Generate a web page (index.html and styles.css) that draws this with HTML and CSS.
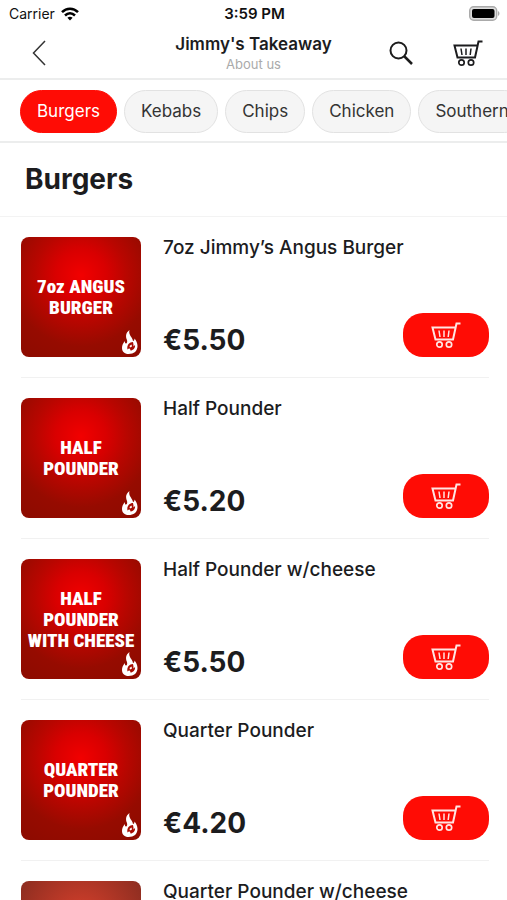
FILE: index.html
```
<!DOCTYPE html>
<html lang="en">
<head>
    <meta charset="UTF-8">
    <meta name="viewport" content="width=device-width, initial-scale=1.0">
    <title>Jimmy's Takeaway</title>
    <link rel="stylesheet" href="styles.css">
</head>
<body>
    <!-- Shared icons -->
    <svg class="sprite" aria-hidden="true">
        <symbol id="cart" viewBox="0 0 30 28">
            <g fill="none" stroke="currentColor" stroke-width="2">
                <path d="M29.5 2.500H25.500L22 18.500H4.500L1.500 6.500H24.500"/>
                <path d="M8 9.500l1 6.500M13 9.500V16M18 9.500l-.8 6.500" stroke-width="1.500"/>
                <circle cx="8.500" cy="23.500" r="2.700" stroke-width="1.700"/>
                <circle cx="18" cy="23.500" r="2.700" stroke-width="1.700"/>
            </g>
        </symbol>
        <symbol id="flame" viewBox="0 0 16 24">
            <path fill="#fff" d="M7.500 0C3.500 3 3.500 6.500 5 10C5.500 12 5 13.500 4 13.500C3 13.500 2.800 12.500 3 11C.8 13.500 0 15.500 0 18C0 21.500 2.500 24 6.500 24C12 24 15.500 21 15.500 16C15.500 12.500 14 10.500 12.500 8.500C12.500 10 12 11 11 11C10.500 7 6 5 7.500 0Z"/>
            <path fill="#a80c02" d="M11 12C7.500 12 4.500 15 5.500 19.500C7 18 8 18 8.500 20.500C11 20.500 13.500 18 13 15L11.500 16.500C11.500 15 11.500 13.500 11 12Z"/>
            <path fill="#fff" d="M7.500 16l2-1.500 .5 2-2 1z"/>
        </symbol>
    </svg>

    <div class="status-bar">
        <div class="carrier">
            <span>Carrier</span>
            <svg width="18" height="14" viewBox="0 0 18 14" fill="none" stroke="#000" stroke-width="2.500">
                <path d="M1 5.200C5.500 .6 12.500 .6 17 5.200"/>
                <path d="M4 8.500C7 5.600 11 5.600 14 8.500"/>
                <path d="M6.400 10.800C8 9.400 10 9.400 11.600 10.800L9 13.600Z" fill="#000" stroke="none"/>
            </svg>
        </div>
        <span class="time">3:59 PM</span>
        <svg class="battery" width="31" height="15" viewBox="0 0 31 15">
            <rect x=".7" y=".7" width="27" height="13.600" rx="4" fill="#ddd" stroke="#aaa" stroke-width="1.400"/>
            <rect x="3" y="3" width="22.500" height="9" rx="2" fill="#000"/>
            <path d="M29 5C31 6 31 9 29 10Z" fill="#aaa"/>
        </svg>
    </div>

    <header class="header">
        <button class="icon-button back" type="button" aria-label="Back">
            <svg width="14" height="26" viewBox="0 0 14 26" fill="none" stroke="#333" stroke-width="1.500"><path d="M13 1L1.500 13L13 25"/></svg>
        </button>
        <div class="title">
            <h1>Jimmy's Takeaway</h1>
            <a href="#about">About us</a>
        </div>
        <div class="actions">
            <button class="icon-button" type="button" aria-label="Search">
                <svg width="24" height="24" viewBox="0 0 24 24" fill="none" stroke="#1c1c1c" stroke-width="2"><circle cx="9.500" cy="9.500" r="8"/><path d="M15 15l8 8" stroke-width="2.500"/></svg>
            </button>
            <button class="icon-button" type="button" aria-label="Basket">
                <svg width="30" height="28"><use href="#cart"/></svg>
            </button>
        </div>
    </header>

    <nav class="tabs">
        <a class="tab active" href="#burgers">Burgers</a>
        <a class="tab" href="#kebabs">Kebabs</a>
        <a class="tab" href="#chips">Chips</a>
        <a class="tab" href="#chicken">Chicken</a>
        <a class="tab" href="#southern">Southern</a>
    </nav>

    <main id="burgers">
        <h2>Burgers</h2>
        <ul class="menu">
            <li class="item">
                <div class="thumb">7oz ANGUS<br>BURGER<svg class="flame"><use href="#flame"/></svg></div>
                <div class="info">
                    <h3>7oz Jimmy’s Angus Burger</h3>
                    <div class="buy">
                        <span class="price">€5.50</span>
                        <button class="add" type="button" aria-label="Add 7oz Jimmy’s Angus Burger"><svg width="30" height="28"><use href="#cart"/></svg></button>
                    </div>
                </div>
            </li>
            <li class="item">
                <div class="thumb">HALF<br>POUNDER<svg class="flame"><use href="#flame"/></svg></div>
                <div class="info">
                    <h3>Half Pounder</h3>
                    <div class="buy">
                        <span class="price">€5.20</span>
                        <button class="add" type="button" aria-label="Add Half Pounder"><svg width="30" height="28"><use href="#cart"/></svg></button>
                    </div>
                </div>
            </li>
            <li class="item">
                <div class="thumb">HALF<br>POUNDER<br>WITH CHEESE<svg class="flame"><use href="#flame"/></svg></div>
                <div class="info">
                    <h3>Half Pounder w/cheese</h3>
                    <div class="buy">
                        <span class="price">€5.50</span>
                        <button class="add" type="button" aria-label="Add Half Pounder w/cheese"><svg width="30" height="28"><use href="#cart"/></svg></button>
                    </div>
                </div>
            </li>
            <li class="item">
                <div class="thumb">QUARTER<br>POUNDER<svg class="flame"><use href="#flame"/></svg></div>
                <div class="info">
                    <h3>Quarter Pounder</h3>
                    <div class="buy">
                        <span class="price">€4.20</span>
                        <button class="add" type="button" aria-label="Add Quarter Pounder"><svg width="30" height="28"><use href="#cart"/></svg></button>
                    </div>
                </div>
            </li>
            <li class="item">
                <div class="thumb faded"></div>
                <div class="info">
                    <h3>Quarter Pounder w/cheese</h3>
                </div>
            </li>
        </ul>
    </main>
</body>
</html>
```
FILE: styles.css
```
* {
    box-sizing: border-box;
}
html, body {
    height: 100%;
}
body {
    margin: 0;
    display: flex;
    flex-direction: column;
    overflow: hidden;
    background: #fff;
    color: #1c1c1e;
    font-family: Inter, "Liberation Sans", sans-serif;
}
h1, h2, h3 {
    margin: 0;
    font-weight: 600;
}
button {
    padding: 0;
    border: none;
    background: none;
    color: inherit;
    cursor: pointer;
}
a {
    text-decoration: none;
}
svg {
    display: block;
}
.sprite {
    display: none;
}

/* Status bar */
.status-bar {
    flex: none;
    display: grid;
    grid-template-columns: 1fr auto 1fr;
    align-items: center;
    height: 27px;
    padding: 0 7px 0 9px;
    font-size: 14px;
    color: #111;
}
.carrier {
    display: flex;
    align-items: center;
    gap: 6px;
}
.time {
    font-size: 15px;
    font-weight: 600;
}
.battery {
    justify-self: end;
}

/* Header */
.header {
    flex: none;
    display: grid;
    grid-template-columns: 1fr auto 1fr;
    align-items: center;
    height: 53px;
    padding: 0 24px;
    border-bottom: 2px solid #eceded;
}
.back {
    justify-self: start;
    padding-left: 8px;
}
.title {
    text-align: center;
}
.title h1 {
    font-size: 17px;
    line-height: 22px;
}
.title a {
    display: block;
    font-size: 13px;
    line-height: 18px;
    color: #aaa;
}
.actions {
    display: flex;
    justify-content: flex-end;
    align-items: center;
    gap: 40px;
}

/* Category tabs */
.tabs {
    flex: none;
    display: flex;
    gap: 7px;
    padding: 10px 20px 8px;
    border-bottom: 2px solid #eceded;
    overflow: hidden;
}
.tab {
    flex: none;
    padding: 0 16px;
    border: 1px solid #e2e2e2;
    border-radius: 22px;
    background: #f5f5f5;
    color: #333;
    font-size: 17px;
    line-height: 41px;
}
.tab.active {
    background: #ff0c05;
    border-color: #ff0c05;
    color: #fff;
}

/* Menu list */
main {
    flex: 1;
    min-height: 0;
    overflow: hidden;
}
h2 {
    padding: 0 25px;
    border-bottom: 1px solid #f3f3f3;
    font-size: 28px;
    font-weight: 700;
    line-height: 73px;
}
.menu {
    margin: 0;
    padding: 0 18px 0 21px;
    list-style: none;
}
.item {
    display: flex;
    gap: 22px;
    padding: 20px 0;
    border-bottom: 1px solid #f1f1f1;
}
.thumb {
    flex: none;
    position: relative;
    display: grid;
    place-content: center;
    width: 120px;
    height: 120px;
    border-radius: 8px;
    background: radial-gradient(circle at 50% 32%, #f20000 0, #d90000 25%, #b80600 45%, #960b00 70%, #8c0b00 100%);
    color: #fff;
    font-family: "Liberation Sans Narrow", "Roboto Condensed", "Open Sans Condensed", "DejaVu Sans Condensed", sans-serif;
    font-size: 19px;
    font-weight: 900;
    line-height: 21px;
    text-align: center;
    white-space: nowrap;
}
.thumb.faded {
    background: radial-gradient(circle at 50% 32%, #d8402c 0, #8c2d20 70%);
}
.flame {
    position: absolute;
    right: 3px;
    bottom: 3px;
    width: 16px;
    height: 24px;
}
.info {
    flex: 1;
    display: flex;
    flex-direction: column;
    justify-content: space-between;
}
h3 {
    font-size: 19px;
    font-weight: 500;
    line-height: 22px;
}
.buy {
    display: flex;
    justify-content: space-between;
    align-items: flex-end;
}
.price {
    font-size: 28px;
    font-weight: 700;
    line-height: 34px;
}
.add {
    display: grid;
    place-items: center;
    width: 86px;
    height: 44px;
    border-radius: 20px;
    background: #ff0c05;
    color: #ffe5e3;
}
```
